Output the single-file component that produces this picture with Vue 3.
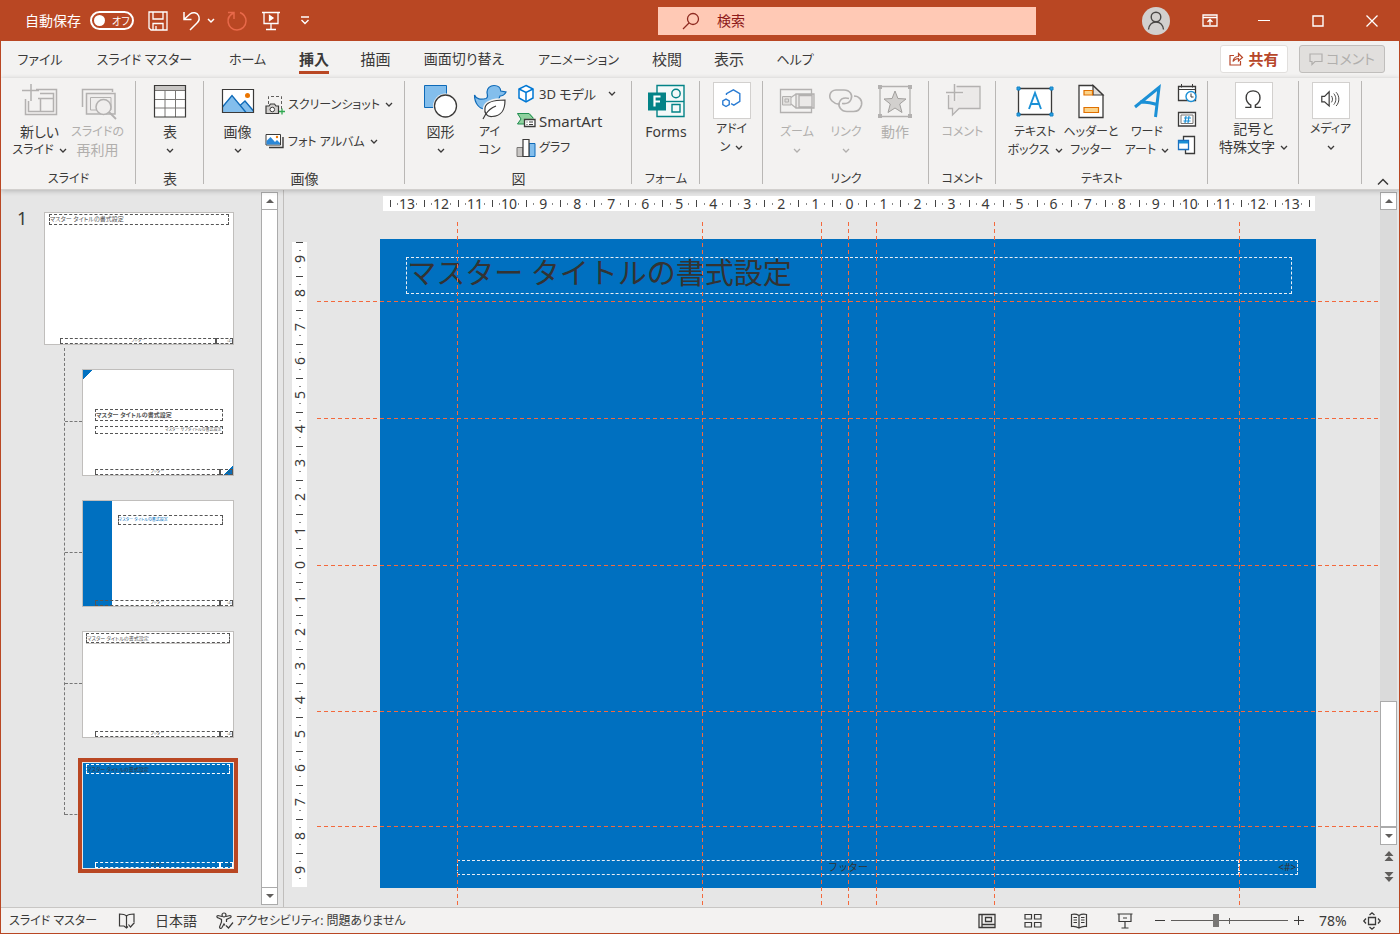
<script setup>
import { ref } from 'vue'

const tabs = [
  { text: 'ファイル', kana: true },
  { text: 'スライド マスター', kana: true },
  { text: 'ホーム', kana: true },
  { text: '挿入', active: true },
  { text: '描画' },
  { text: '画面切り替え', mixed: true },
  { text: 'アニメーション', kana: true },
  { text: '校閲' },
  { text: '表示' },
  { text: 'ヘルプ', kana: true }
]

const icons = {
  newSlide: '<path d="M15 6.500H35.500V31.500H4.500V16M19 10.500H32.500V28.500H7.500V18M17 15.500H32M19.500 15.500V28" fill="none" stroke="#b3b1b0" stroke-width="1.500"/><path d="M10 1V18M1 7.500H18" stroke="#b3b1b0" stroke-width="1.500"/>',
  reuse: '<path d="M3.500 24V6.500H33.500V9" fill="none" stroke="#b3b1b0" stroke-width="1.500"/><path d="M7.500 31V10.500H36V31H7.500Z" fill="#efedec" stroke="#b3b1b0" stroke-width="1.500"/><path d="M11.500 14.500H32V27H11.500Z" fill="none" stroke="#b3b1b0"/><circle cx="24.500" cy="24" r="7.500" fill="#f0eeed" stroke="#b3b1b0" stroke-width="1.500"/><path d="M30 29L37 36" stroke="#b3b1b0" stroke-width="1.800"/>',
  table: '<path d="M3 3H35V34H3Z" fill="#fff"/><path d="M3 3H35V7H3Z" fill="#c8c6c4"/><path d="M3.500 7.500H34.500M3.500 16.500H34.500M3.500 25H34.500M14 7V34M24.500 7V34" stroke="#797775" fill="none"/><path d="M3.500 2.500H34.500V34H3.500Z" fill="none" stroke="#3b3a39" stroke-width="1.200"/>',
  picture: '<path d="M3 6H35V30H3Z" fill="#fff"/><path d="M3.500 24L13 12.500L21 22.500L26 18L34.500 27V29.500H3.500Z" fill="#83beec"/><path d="M3.500 24L13 12.500L27 29.500M21 22.500L26 18L34.500 28" fill="none" stroke="#0e6ab8" stroke-width="1.300"/><circle cx="28.500" cy="12.500" r="2.500" fill="#eb7500"/><path d="M3.500 6.500H34.500V29.500H3.500Z" fill="none" stroke="#3b3a39" stroke-width="1.200"/>',
  screenshot: '<path d="M3.500 9V1.500H16.500V15" fill="none" stroke="#605e5c" stroke-dasharray="3 2"/><path d="M1 11H4L5.500 9H9.500L11 11H13.500V18.500H1Z" fill="#d2d0ce" stroke="#3b3a39" stroke-width="1.200"/><circle cx="7.300" cy="14.500" r="2.300" fill="#fff" stroke="#3b3a39"/><path d="M14 16.500H20M17 13.500V19.500" stroke="#2fa84f" stroke-width="1.300"/>',
  album: '<path d="M1 2.500H15.500V13H1Z" fill="#fff" stroke="#3b3a39"/><path d="M1.500 9L5.500 5L10 10L12 8L15 11V12.500H1.500Z" fill="#2b88d8"/><circle cx="12" cy="5" r="1.200" fill="#eb7500"/><path d="M4 15.500H18V5M18 15.500V5" fill="none" stroke="#3b3a39" stroke-width="1.400"/>',
  shapes: '<path d="M2.500 2.500H24.500V24.500H2.500Z" fill="#83beec" stroke="#0e6ab8"/><circle cx="23.500" cy="23" r="12.500" fill="#f3f2f1"/><circle cx="23.500" cy="23" r="11" fill="#fff" stroke="#3b3a39" stroke-width="1.300"/>',
  iconSet: '<path d="M3.500 12C5 16 10 17 15 15.500C18 14 16 12 16 9C16 5.500 19 2.500 23 2.500C27 2.500 29.500 5 29.800 8L35 9C34 11.500 31 13 29 13L27 18L14 26C8 26 3.500 20 3.500 12Z" fill="#83beec" stroke="#0e6ab8" stroke-width="1.200"/><path d="M34 17C26 17 15 18 14 25C13 30 16 34 21 33.500C31 33 34 27 34 17Z" fill="#f3f2f1" stroke="#f3f2f1" stroke-width="4"/><path d="M34 17C26 17 15 18 14 25C13 30 16 34 21 33.500C31 33 34 27 34 17Z" fill="#fff" stroke="#3b3a39" stroke-width="1.200"/><path d="M12 36L14.500 31.500C17 27.500 20 25 25 23" fill="none" stroke="#3b3a39" stroke-width="1.200"/>',
  cube: '<path d="M10 1.500L17 5V14L10 18L3 14V5Z" fill="#fff" stroke="#0078d4" stroke-width="1.500"/><path d="M3 5L10 8.500L17 5M10 8.500V18" fill="none" stroke="#0078d4" stroke-width="1.500"/>',
  smartArt: '<path d="M1 2.500H14L18 7V8H8V13H1L5 8Z" fill="#8fd19e"/><path d="M8 13H1.500L5 8L1.500 2.500H13L17 7" fill="none" stroke="#218d51"/><path d="M8.500 8.500H19V15.500H8.500Z" fill="#fff" stroke="#3b3a39" stroke-width="1.300"/><path d="M10.500 11H11.500M10.500 13.500H11.500M13 11H17M13 13.500H17" stroke="#3b3a39"/>',
  chart: '<path d="M1 9.500H7V18.500H1Z" fill="#c8c6c4" stroke="#797775"/><path d="M13 5.500H19V18.500H13Z" fill="#83beec" stroke="#0e6ab8"/><path d="M7 1.500H13V18.500H7Z" fill="#fff" stroke="#3b3a39" stroke-width="1.200"/>',
  forms: '<path d="M10 2.500H37V33.500H10Z" fill="#f3f9f9" stroke="#038387" stroke-width="1.400"/><path d="M10 18.500H37" stroke="#038387" stroke-width="1.400"/><circle cx="29" cy="10.500" r="4.200" fill="none" stroke="#038387" stroke-width="1.400"/><path d="M25 21.500H33V29H25Z" fill="none" stroke="#038387" stroke-width="1.400"/><path d="M1 9.500H19V27.500H1Z" fill="#038387"/><path d="M7.500 23.500V13.500H13.500M7.500 18.500H13" fill="none" stroke="#fff" stroke-width="2.200"/>',
  addin: '<path d="M13 13V11.500L20.500 7.500L27.500 11.500V20L21 24L18 22.500" fill="none" stroke="#2b7cd3" stroke-width="1.500"/><path d="M12.500 17.500L16 19.500V23.500L12.500 25.500L9 23.500V19.500Z" fill="none" stroke="#2b7cd3" stroke-width="1.500"/>',
  zoom: '<path d="M2.500 6.500H33.500V29.500H2.500Z" fill="none" stroke="#b3b1b0" stroke-width="1.300"/><path d="M4.500 13.500H13V22H4.500ZM7 16H10.500V19H7Z" fill="#e1dfdd" stroke="#b3b1b0"/><path d="M13 14.500L18 11M13 21L18 25M18 11H36V25H18ZM21 12.500H34V24H21Z" fill="#ebe9e8" stroke="#b3b1b0" stroke-width="1.300"/>',
  link: '<path d="M13 21C9 21.500 7 20 5 18C1 14 2.500 7.500 9 7H17C23 7 26 12 24 16.500C22.500 20 19 21 15 20.500" fill="none" stroke="#b3b1b0" stroke-width="1.600"/><path d="M27 13C32 13 35.500 17 34.500 22C33.500 26 31 28.500 26.500 28.500H20C14 28.500 10.500 23 12.500 19C14 15.500 18 14.500 22 15.500" fill="none" stroke="#b3b1b0" stroke-width="1.600"/>',
  action: '<path d="M4 5.500V32M34 5.500V32M6 3.500H32M6 33.500H32" stroke="#b3b1b0" stroke-width="1.300"/><path d="M2 2H6V6H2ZM32 2H36V6H32ZM2 31H6V35H2ZM32 31H36V35H32Z" fill="#b3b1b0"/><path d="M19 8L21.900 15.500L30 16L23.700 21L26 29.500L19 25L12 29.500L14.300 21L8 16L16.100 15.500Z" fill="#d2d0ce" stroke="#a19f9d"/>',
  comment: '<path d="M10 3.500H36V25.500H15L8.500 32V25.500H4.500V12" fill="#ebe9e8" stroke="#b3b1b0" stroke-width="1.300"/><path d="M10.500 0V18M1.500 9.500H19" stroke="#f3f2f1" stroke-width="4"/><path d="M10.500 1V18M2 9.500H19" stroke="#b3b1b0" stroke-width="1.500"/>',
  textBox: '<path d="M2.500 5.500H35.500V31.500H2.500Z" fill="#fff" stroke="#3b3a39" stroke-width="1.300"/><path d="M1 4H4V7H1ZM34 4H37V7H34ZM1 30H4V33H1ZM34 30H37V33H34Z" fill="#2b9fe0" stroke="#1584c8"/><path d="M13 26L19 10L25 26M15 21H23" fill="none" stroke="#1b90d6" stroke-width="1.900"/>',
  header: '<path d="M7 2.500H21L31 12V34.500H7Z" fill="#fff" stroke="#3b3a39" stroke-width="1.300"/><path d="M21 2.500V12H31Z" fill="#e1dfdd" stroke="#3b3a39" stroke-width="1.200"/><path d="M12 7.500H20.500V12H12ZM12 24.500H26.500V29.500H12Z" fill="#fbd38a" stroke="#e07000" stroke-width="1.200"/>',
  wordArt: '<path d="M7 24L31 4.500L27.500 34M12 19C18 19 25 20 30 22" fill="none" stroke="#1b90d6" stroke-width="3"/>',
  date: '<path d="M1.500 3.500H18.500V17.500H1.500Z" fill="#fff" stroke="#3b3a39" stroke-width="1.300"/><path d="M1.500 6.500H18.500M4.500 1V4.500M15.500 1V4.500" stroke="#3b3a39"/><circle cx="14" cy="13.500" r="5" fill="#fff" stroke="#1b90d6" stroke-width="1.400"/><path d="M14 10.500V14H16.500" fill="none" stroke="#3b3a39"/>',
  slideNo: '<path d="M1.500 3.500H18.500V17H1.500Z" fill="#fff" stroke="#3b3a39" stroke-width="1.300"/><path d="M4 6H16V14.500H4Z" fill="none" stroke="#797775"/><path d="M9 7L8 14M12 7L11 14M7 9H14M6.500 12H13.500" stroke="#1b90d6" stroke-width="1.200"/>',
  object: '<path d="M6.500 6V1.500H17.500V18.500H8.500V14" fill="#fff" stroke="#3b3a39" stroke-width="1.300"/><path d="M1.500 5.500H11.500V14.500H1.500Z" fill="#fff" stroke="#1b70c0" stroke-width="1.300"/><path d="M2 6H11V8.500H2Z" fill="#1b90d6"/>',
  omega: '<path d="M9.500 26.500H15.500V24C12 22 10.500 19.500 10.500 16C10.500 11.500 13.500 8.500 18 8.500C22.500 8.500 25.500 11.500 25.500 16C25.500 19.500 24 22 20.500 24V26.500H26.500" fill="none" stroke="#3b3a39" stroke-width="1.500"/>',
  sound: '<path d="M9 14.500H12L17 9.500V25L12 20.500H9Z" fill="none" stroke="#3b3a39" stroke-width="1.300"/><path d="M19.500 14C21 16 21 19 19.500 21M22 11.500C25 15 25 20 22 23.500M24.500 10C28.500 14 28.500 21 24.500 25" fill="none" stroke="#3b3a39"/>'
}

const groups = [
  { name: 'スライド', cls: 'g-slide', kana: true, big: [
    { icon: 'newSlide', lines: ['新しい', 'スライド'], chev: true },
    { icon: 'reuse', lines: ['スライドの', '再利用'], off: true }] },
  { name: '表', cls: 'g-table', big: [{ icon: 'table', lines: ['表', ''], chev: true }] },
  { name: '画像', cls: 'g-image', big: [{ icon: 'picture', lines: ['画像', ''], chev: true }],
    small: [{ icon: 'screenshot', text: 'スクリーンショット', chev: true }, { icon: 'album', text: 'フォト アルバム', chev: true }] },
  { name: '図', cls: 'g-figure', big: [
    { icon: 'shapes', lines: ['図形', ''], chev: true },
    { icon: 'iconSet', lines: ['アイ', 'コン'] }],
    small: [{ icon: 'cube', text: '3D モデル', chev: true }, { icon: 'smartArt', text: 'SmartArt', latin: true }, { icon: 'chart', text: 'グラフ', kana: true }] },
  { name: 'フォーム', cls: 'g-form', kana: true, big: [{ icon: 'forms', lines: ['Forms'] }] },
  { name: '', cls: 'g-addin', big: [{ icon: 'addin', lines: ['アドイ', 'ン'], chev: true, boxed: true }] },
  { name: 'リンク', cls: 'g-link', kana: true, big: [
    { icon: 'zoom', lines: ['ズーム', ''], chev: true, off: true },
    { icon: 'link', lines: ['リンク', ''], chev: true, off: true },
    { icon: 'action', lines: ['動作'], off: true }] },
  { name: 'コメント', cls: 'g-comment', kana: true, big: [{ icon: 'comment', lines: ['コメント'], off: true }] },
  { name: 'テキスト', cls: 'g-text', kana: true, big: [
    { icon: 'textBox', lines: ['テキスト', 'ボックス'], chev: true },
    { icon: 'header', lines: ['ヘッダーと', 'フッター'] },
    { icon: 'wordArt', lines: ['ワード', 'アート'], chev: true }],
    tiny: [{ icon: 'date', label: '日付と時刻' }, { icon: 'slideNo', label: 'スライド番号' }, { icon: 'object', label: 'オブジェクト' }] },
  { name: '', cls: 'g-symbol', big: [{ icon: 'omega', lines: ['記号と', '特殊文字'], chev: true, boxed: true }] },
  { name: '', cls: 'g-media', big: [{ icon: 'sound', lines: ['メディア', ''], chev: true, boxed: true }] }
]

const isKana = (s) => /^[ぁ-ヿ\s]+$/.test(s)
const marks = (n) => Array.from({ length: n * 2 + 1 }, (_, i) => Math.abs(i - n))
const hMarks = marks(13)
const vMarks = marks(9)

const vGuides = ['8.3%', '34.5%', '47.2%', '50%', '53%', '65.6%', '91.8%']
const hGuides = ['9.7%', '27.6%', '50.3%', '72.8%', '90.5%']

const layouts = ['title', 'section', 'plain', 'blue']
const selected = ref('blue')
const zoomLevel = ref(38)
const autosave = ref(false)
</script>

<template>
  <div class="window">
    <header class="titlebar">
      <div class="quick">
        <span class="autosave">自動保存</span>
        <button class="toggle" role="switch" :aria-checked="autosave" aria-label="自動保存" @click="autosave = !autosave"><i></i><span>オフ</span></button>
        <button class="qbtn save" aria-label="保存"><svg width="20" height="20" viewBox="0 0 20 20" fill="none" stroke="#fff" stroke-width="1.300"><path d="M1 1H19V19H3L1 17ZM5 1V8H15V1M5 19V12.500H15V19M8 19V15" /></svg></button>
        <button class="qbtn undo" aria-label="元に戻す"><svg width="20" height="20" viewBox="0 0 20 20" fill="none" stroke="#fff" stroke-width="1.500"><path d="M2 1V8.500H9.500M2 8.500L8 3C11 .7 15 1.500 16.500 4.500C18 7.500 17 10 15 12L8 19" /></svg></button>
        <button class="qbtn drop" aria-label="元に戻す一覧"><svg width="8" height="5" viewBox="0 0 8 5" fill="none" stroke="#fff" stroke-width="1.500"><path d="M1 1L4 4L7 1" /></svg></button>
        <button class="qbtn redo" aria-label="やり直し"><svg width="20" height="20" viewBox="0 0 20 20" fill="none" stroke="#e8694a" stroke-width="1.500"><path d="M1 1.500H7V8M6.500 2C2.500 4 .500 7.500 1.200 11.500C2 16 5.500 19 10 19C15 19 19 15 19 10C19 6 16.500 3 13 1.500" /></svg></button>
        <button class="qbtn show" aria-label="スライド ショー"><svg width="20" height="20" viewBox="0 0 20 20" fill="none" stroke="#fff" stroke-width="1.300"><path d="M1 1.500H19M3 1.500V12.500H17V1.500M10 12.500V18M5 18.500H15" /><path d="M8.500 4.500L12 7L8.500 9.500Z" fill="#fff" /></svg></button>
        <button class="qbtn custom" aria-label="カスタマイズ"><svg width="10" height="9" viewBox="0 0 10 9" fill="none" stroke="#fff" stroke-width="1.400"><path d="M1 1H9M1.500 4L5 7.500L8.500 4" /></svg></button>
      </div>
      <label class="search">
        <svg width="18" height="18" viewBox="0 0 18 18" fill="none" stroke="#8e2a20" stroke-width="1.300"><circle cx="11" cy="7" r="5.500" /><path d="M7 11L1 17" /></svg>
        <input type="search" placeholder="検索" aria-label="検索" />
      </label>
      <div class="caption">
        <button class="avatar" aria-label="アカウント"><svg width="28" height="28" viewBox="0 0 28 28" fill="none" stroke="#4a4846" stroke-width="1.400"><circle cx="14" cy="10" r="4.800" /><path d="M6.500 22.500C7 18 10 15 14 15C18 15 21 18 21.500 22.500" /></svg></button>
        <button class="cap" aria-label="リボンの表示オプション"><svg width="16" height="13" viewBox="0 0 16 13" fill="none" stroke="#fff" stroke-width="1.300"><path d="M1 1H15V12H1ZM1 3.500H15M8 11V5.500M5.500 8L8 5.500L10.500 8" /></svg></button>
        <button class="cap" aria-label="最小化"><svg width="12" height="12" viewBox="0 0 12 12" stroke="#fff"><path d="M0 5.500H12" /></svg></button>
        <button class="cap" aria-label="最大化"><svg width="12" height="12" viewBox="0 0 12 12" fill="none" stroke="#fff" stroke-width="1.400"><path d="M1 1H11V11H1Z" /></svg></button>
        <button class="cap" aria-label="閉じる"><svg width="12" height="12" viewBox="0 0 12 12" stroke="#fff" stroke-width="1.300"><path d="M.5 .5L11.500 11.500M11.500 .5L.5 11.500" /></svg></button>
      </div>
    </header>

    <nav class="tabbar">
      <div class="tabs">
        <button v-for="t in tabs" :key="t.text" class="tab" :class="{ kana: t.kana, mixed: t.mixed, active: t.active }"><span>{{ t.text }}</span></button>
      </div>
      <div class="actions">
        <button class="share"><svg width="14" height="14" viewBox="0 0 14 14" fill="none" stroke="#b7472a" stroke-width="1.200"><path d="M5 3.500H1V13H11.500V9M4 9.500C4.500 6 6.500 4.500 9.500 4.500V1.500L13.500 5.500L9.500 9V6.500C7 6.500 5.500 7.500 4 9.500Z" /></svg>共有</button>
        <button class="comments" disabled><svg width="14" height="13" viewBox="0 0 14 13" fill="none" stroke="#b1afad" stroke-width="1.200"><path d="M1 1H13V8.500H6L3 11.500V8.500H1Z" /></svg>コメント</button>
      </div>
    </nav>

    <section class="ribbon">
      <div v-for="g in groups" :key="g.cls" class="group" :class="g.cls">
        <div class="items">
          <button v-for="b in g.big" :key="b.icon" class="big" :class="{ off: b.off, boxed: b.boxed }" :disabled="b.off">
            <svg class="big-icon" width="38" height="38" viewBox="0 0 38 38" v-html="icons[b.icon]"></svg>
            <span v-for="(l, i) in b.lines" :key="i" class="line" :class="{ kana: isKana(l) }">{{ l }}<svg v-if="b.chev && i === b.lines.length - 1" class="chev" width="8" height="5" viewBox="0 0 8 5"><path d="M1 1L4 4L7 1" fill="none" stroke="currentColor" stroke-width="1.300" /></svg></span>
          </button>
          <div v-if="g.small" class="small-list">
            <button v-for="s in g.small" :key="s.icon" class="small">
              <svg width="20" height="20" viewBox="0 0 20 20" v-html="icons[s.icon]"></svg>
              <span :class="{ latin: s.latin, kana: s.kana }">{{ s.text }}</span>
              <svg v-if="s.chev" class="chev" width="8" height="5" viewBox="0 0 8 5"><path d="M1 1L4 4L7 1" fill="none" stroke="currentColor" stroke-width="1.300" /></svg>
            </button>
          </div>
          <div v-if="g.tiny" class="tiny-list">
            <button v-for="s in g.tiny" :key="s.icon" class="tiny" :aria-label="s.label"><svg width="20" height="20" viewBox="0 0 20 20" v-html="icons[s.icon]"></svg></button>
          </div>
        </div>
        <div class="gname" :class="{ kana: g.kana }">{{ g.name }}</div>
      </div>
      <button class="collapse" aria-label="リボンを折りたたむ"><svg width="12" height="8" viewBox="0 0 12 8" fill="none" stroke="#3b3a39" stroke-width="1.500"><path d="M1 6.500L6 1.500L11 6.500" /></svg></button>
    </section>

    <main class="work">
      <aside class="panel">
        <span class="num">1</span>
        <div class="thumbs">
          <button class="thumb master" aria-label="スライド マスター">
            <span class="ph head">マスター タイトルの書式設定</span>
            <span class="ph foot">フッター</span><span class="ph no">‹#›</span>
          </button>
          <div class="tree">
            <div v-for="l in layouts" :key="l" class="branch">
              <button class="thumb" :class="[l, { selected: selected === l }]" :aria-label="'レイアウト ' + l" @click="selected = l">
                <span class="ph head">マスター タイトルの書式設定</span>
                <span v-if="l === 'title'" class="ph sub">マスター サブタイトルの書式設定</span>
                <span class="ph foot">フッター</span><span class="ph no">‹#›</span>
              </button>
            </div>
          </div>
        </div>
      </aside>
      <div class="scroll left">
        <button class="sb up" aria-label="上へ"></button>
        <div class="track"></div>
        <button class="sb down" aria-label="下へ"></button>
      </div>
      <div class="stage">
        <div class="hruler"><span v-for="(m, i) in hMarks" :key="i">{{ m }}</span><i></i></div>
        <div class="vruler"><span v-for="(m, i) in vMarks" :key="i"><b>{{ m }}</b></span></div>
        <div class="slide">
          <div class="box title">マスター タイトルの書式設定</div>
          <div class="box footer">フッター</div>
          <div class="box number">&lt;#&gt;</div>
          <svg class="guides vertical" stroke="#f4693c" stroke-dasharray="4 3" shape-rendering="crispEdges"><line v-for="x in vGuides" :key="x" :x1="x" :x2="x" y1="0" y2="100%" /></svg>
          <svg class="guides horizontal" stroke="#f4693c" stroke-dasharray="4 3" shape-rendering="crispEdges"><line v-for="y in hGuides" :key="y" x1="0" x2="100%" :y1="y" :y2="y" /></svg>
        </div>
      </div>
      <div class="scroll right">
        <button class="sb up" aria-label="上へ"></button>
        <div class="gap"></div>
        <div class="knob"></div>
        <button class="sb down" aria-label="下へ"></button>
        <button class="page" aria-label="前のスライド"><svg width="10" height="12" viewBox="0 0 10 12" fill="#605e5c"><path d="M5 0L9.500 5H.5ZM5 5L9.500 10H.5Z" /></svg></button>
        <button class="page" aria-label="次のスライド"><svg width="10" height="12" viewBox="0 0 10 12" fill="#605e5c"><path d="M.5 1H9.500L5 6ZM.5 6H9.500L5 11Z" /></svg></button>
      </div>
    </main>

    <footer class="status">
      <span class="s-view">スライド マスター</span>
      <button class="s-icon book" aria-label="スペル チェック"><svg width="18" height="16" viewBox="0 0 18 16" fill="none" stroke="#3b3a39" stroke-width="1.200"><path d="M8.500 14V3C6.500 1 4 1 1.500 1V13H6L8.500 15L10 13.500M8.500 3C10.500 1 13 1 16 1V9M10.500 11.500L12.500 14L16.500 9.500" /></svg></button>
      <span class="s-lang">日本語</span>
      <button class="s-access"><svg width="18" height="18" viewBox="0 0 18 18" fill="none" stroke="#3b3a39" stroke-width="1.200"><circle cx="8" cy="3" r="2" /><path d="M6 4.500L2 3.500C.5 3.500 .5 5.500 2 5.800L5.500 7.500V10L3.500 15C3.500 16.500 5 17 6 15.500L8 12L9 13.500M10 4.500L14 3.500C15.500 3.500 15.500 5.500 14 5.800L10.500 7.500V10M10 13.500L12.500 16L17 10.500" /></svg>アクセシビリティ: 問題ありません</button>
      <div class="s-right">
        <button class="s-icon" aria-label="標準"><svg width="18" height="16" viewBox="0 0 18 16" fill="none" stroke="#3b3a39" stroke-width="1.300"><path d="M1 1.500H17V14.500H1ZM4 1.500V14.500M4 11.500H17M7.500 4.500H13.500V8.500H7.500Z" /></svg></button>
        <button class="s-icon" aria-label="スライド一覧"><svg width="18" height="16" viewBox="0 0 18 16" fill="none" stroke="#3b3a39" stroke-width="1.200"><path d="M1 1.500H7.500V6H1ZM10.500 1.500H17V6H10.500ZM1 9.500H7.500V14H1ZM10.500 9.500H17V14H10.500Z" /></svg></button>
        <button class="s-icon" aria-label="閲覧表示"><svg width="18" height="16" viewBox="0 0 18 16" fill="none" stroke="#3b3a39" stroke-width="1.200"><path d="M9 15V2.500C6.500 1 4 1 1.500 1.500V13.500C4 13 6.500 13.500 9 15C11.500 13.500 14 13 16.500 13.500V1.500C14 1 11.500 1 9 2.500M3.500 4.500H7M3.500 7H7M3.500 9.500H7M11 4.500H14.500M11 7H14.500M11 9.500H14.500" /></svg></button>
        <button class="s-icon" aria-label="スライド ショー"><svg width="18" height="16" viewBox="0 0 18 16" fill="none" stroke="#3b3a39" stroke-width="1.200"><path d="M1.500 1H16.500M3 1V8.500H15V1M9 8.500V15M5.500 15H12.500M7 5H11" /></svg></button>
        <button class="zbtn" aria-label="縮小"><svg width="10" height="10" viewBox="0 0 10 10" stroke="#3b3a39"><path d="M0 4.500H10" /></svg></button>
        <input v-model="zoomLevel" class="slider" type="range" min="0" max="100" aria-label="ズーム" />
        <button class="zbtn" aria-label="拡大"><svg width="10" height="10" viewBox="0 0 10 10" stroke="#3b3a39"><path d="M0 4.500H10M4.500 0V9" /></svg></button>
        <span class="percent">78%</span>
        <button class="fit" aria-label="ウィンドウに合わせる"><svg width="18" height="18" viewBox="0 0 18 18" fill="none" stroke="#3b3a39" stroke-width="1.300"><path d="M5.500 5.500H12.500V12.500H5.500ZM6.500 3L9 .8L11.500 3M6.500 15L9 17.200L11.500 15M3 6.500L.8 9L3 11.500M15 6.500L17.200 9L15 11.500" /></svg></button>
      </div>
    </footer>
  </div>
</template>

<style>
body { background: #e6e6e6; }
</style>

<style scoped>
* { box-sizing: border-box; }
.window {
  display: flex; flex-direction: column; height: 100vh; min-width: 1400px;
  border: 1px solid #b94723; border-top: 0; background: #e6e6e6; color: #3b3a39;
  font-family: "Noto Sans", "Noto Sans CJK JP", sans-serif; font-size: 14px; line-height: 18px;
  font-feature-settings: "palt"; white-space: nowrap; overflow: hidden;
}
button { border: 0; background: none; padding: 0; margin: 0; font: inherit; font-feature-settings: inherit; color: inherit; white-space: nowrap; }
svg { display: block; flex: none; overflow: visible; }

.titlebar { display: grid; grid-template-columns: 47fr 27fr 26fr; height: 41px; align-items: center; background: #b94723; color: #fff; flex: none; }
.quick { display: flex; align-items: center; padding-left: 24px; }
.autosave { width: 65px; }
.toggle { display: flex; align-items: center; gap: 7px; width: 44px; height: 19px; border: 2px solid #fff; border-radius: 10px; padding: 0 2px; font-size: 10px; }
.toggle i { width: 11px; height: 11px; border-radius: 50%; background: #fff; flex: none; }
.qbtn { display: flex; align-items: center; justify-content: center; height: 24px; width: 20px; }
.save { margin-left: 14px; }
.undo { margin-left: 14px; }
.drop { width: 8px; margin-left: 5px; }
.redo { margin-left: 12px; }
.show { margin-left: 14px; }
.custom { margin-left: 14px; }
.search { display: flex; align-items: center; height: 28px; background: #ffc9b5; padding-left: 24px; gap: 17px; }
.search input { flex: 1; min-width: 0; border: 0; outline: 0; background: none; padding: 0; font: inherit; color: #8e1a1a; }
.search input::placeholder { color: #8e1a1a; opacity: 1; }
.caption { display: flex; align-items: center; justify-content: flex-end; }
.avatar { width: 28px; height: 28px; border-radius: 50%; background: #d2d0ce; margin-right: 13px; }
.cap { display: flex; align-items: center; justify-content: center; width: 54px; height: 40px; }

.tabbar { display: flex; justify-content: space-between; height: 37px; background: #f3f2f1; flex: none; }
.tabs { display: grid; grid-template-columns: 78px 131px 75px 58px 65px 112px 117px 60px 64px 68px; }
.tab { display: flex; align-items: center; justify-content: center; font-size: 15px; }
.tab span { line-height: 24px; border-bottom: 3px solid transparent; margin-top: 1px; }
.tab.mixed { font-size: 14px; }
.tab.kana { font-size: 13px; }
.tab.active { font-weight: 700; }
.tab.active span { border-color: #b94723; }
.actions { display: flex; gap: 11px; padding: 4px 14px 0 0; }
.share, .comments { display: flex; align-items: center; justify-content: center; gap: 5px; height: 28px; border-radius: 3px; }
.share { width: 68px; background: #fff; color: #b7472a; font-weight: 700; font-size: 15px; border: 1px solid #e1dfdd; }
.comments { width: 86px; background: #e1dfdd; color: #b1afad; border: 1px solid #c0bebc; font-size: 14px; gap: 3px; }

.ribbon { display: flex; height: 112px; background: #f3f2f1; flex: none; border-bottom: 1px solid #d2d0ce; box-shadow: 0 1px 5px #0000003a; position: relative; z-index: 1; }
.group { display: flex; flex-direction: column; position: relative; flex: none; }
.group::after { content: ""; position: absolute; right: 0; top: 3px; bottom: 5px; width: 1px; background: #b9b7b5; }
.items { display: flex; flex: 1; justify-content: center; padding-top: 5px; align-items: flex-start; }
.gname { height: 20px; line-height: 20px; text-align: center; }
.gname.kana { font-size: 12px; }
.g-slide { width: 135px; }
.g-table { width: 68px; }
.g-image { width: 201px; }
.g-figure { width: 227px; }
.g-form { width: 68px; }
.g-addin { width: 63px; }
.g-link { width: 166px; }
.g-comment { width: 67px; }
.g-text { width: 212px; }
.g-symbol { width: 91px; }
.g-media { width: 63px; }
.big { display: flex; flex-direction: column; align-items: center; width: 49px; }
.g-slide .big { width: 58px; }
.g-text .big { width: 56px; }
.g-symbol .big { width: 80px; }
.g-image .items, .g-figure .items { justify-content: flex-start; }
.g-image .items { padding-left: 9px; }
.g-figure .items { padding-left: 11px; }
.line { display: flex; align-items: center; justify-content: center; gap: 5px; height: 18px; }
.line.kana { font-size: 12px; }
.big-icon { margin-bottom: 2px; }
.off { color: #b1afad; }
.boxed .big-icon { background: #fff; border: 1px solid #d2d0ce; height: 37px; margin: -1px 0 1px; }
.small-list { display: flex; flex-direction: column; }
.small { display: flex; align-items: center; gap: 3px; height: 27px; }
.g-image .small-list { margin-left: 3px; padding-top: 8px; gap: 10px; }
.g-image .small { font-size: 12px; }
.g-image .small .chev { margin-left: 2px; }
.small .chev { margin-left: 9px; }
.g-figure .small-list { margin-left: 2px; margin-top: -3px; }
.g-figure .small { font-size: 13px; }
.small .latin { font-size: 15px; }
.small .kana { font-size: 12px; }
.tiny-list { display: flex; flex-direction: column; gap: 6px; margin-left: 2px; }
.collapse { margin: auto 10px 3px auto; }

.work { display: flex; flex: 1; min-height: 0; }
.panel { display: flex; width: 260px; padding: 22px 0 0 16px; flex: none; overflow: hidden; }
.num { width: 27px; font-size: 18px; line-height: 12px; }
.thumb { display: block; position: relative; width: 152px; height: 107px; background: #fff; border: 1px solid #c0bebc; text-align: left; overflow: hidden; color: #555; }
.master { width: 190px; height: 133px; }
.tree { position: relative; margin-top: 24px; padding-left: 38px; display: flex; flex-direction: column; gap: 24px; }
.tree::before { content: ""; position: absolute; left: 20px; top: -21px; bottom: 54px; border-left: 1px dashed #777; }
.branch { position: relative; }
.branch::before { content: ""; position: absolute; left: -17px; width: 17px; top: 52px; border-top: 1px dashed #777; }
.ph { position: absolute; border: 1px dashed #555; font-size: 6px; line-height: 8px; overflow: hidden; }
.head { left: 2%; right: 2%; top: 1%; height: 11px; }
.foot { left: 8%; right: 9%; bottom: 0; height: 6px; line-height: 4px; font-size: 4px; text-align: center; }
.no { right: 0; width: 9%; bottom: 0; height: 6px; line-height: 4px; font-size: 4px; text-align: right; }
.thumb:not(.master) .head { font-size: 5px; height: 10px; }
.thumb.title .head { left: 8%; right: 7%; top: 37%; height: 12px; font-size: 6px; line-height: 10px; font-weight: 700; }
.sub { left: 8%; right: 7%; top: 53%; height: 8px; line-height: 6px; font-size: 4px; text-align: right; }
.thumb.title { background: linear-gradient(135deg, #0070c0 7px, transparent 7px), linear-gradient(315deg, #0070c0 7px, transparent 7px), #fff; }
.thumb.section { background: linear-gradient(90deg, #0070c0 29px, #fff 29px); }
.thumb.section .head { left: 23%; right: 7%; top: 13%; font-size: 4px; color: #0070c0; }
.thumb.plain .head { box-shadow: 0 1px 0 #c8c6c4; }
.thumb.blue { background: #0070c0; color: #333; }
.blue .ph { border-color: #fff; }
.selected { outline: 4px solid #b94723; border-color: #e6e6e6; }

.scroll { display: flex; flex-direction: column; width: 17px; padding: 2px 0; flex: none; align-items: stretch; }
.sb { height: 18px; border: 1px solid #ababab; background: #fff; display: flex; align-items: center; justify-content: center; flex: none; }
.up::before { content: ""; border: 4px solid transparent; border-top: 0; border-bottom-color: #605e5c; }
.down::before { content: ""; border: 4px solid transparent; border-bottom: 0; border-top-color: #605e5c; }
.track { flex: 1; background: #fff; border: 1px solid #ababab; border-width: 0 1px; }
.right { margin-right: 2px; }
.gap { flex: 497; background: #dadada; }
.knob { flex: 125; background: #fff; border: 1px solid #ababab; }
.page { display: flex; justify-content: center; height: 20px; align-items: center; }
.right .sb.down { margin-bottom: 2px; }
.right .page:last-child { margin-bottom: 18px; }

.stage { display: grid; grid-template-columns: 8px 15px 73px 1fr 64px; grid-template-rows: 6px 15px 28px 1fr 19px; flex: 1; min-width: 0; margin-left: 5px; border-left: 1px solid #c0bebc; }
.hruler { grid-area: 2 / 4; display: flex; background: #fff; margin: 0 1px 0 3px; padding: 0 5px 0 7px; align-items: center; }
.hruler span { flex: 1; text-align: center; line-height: 15px; font-size: 14px; background: linear-gradient(#444, #444) 0 50% / 1px 7px no-repeat, linear-gradient(#888, #888) 22% 50% / 1px 2px no-repeat, linear-gradient(#888, #888) 78% 50% / 1px 2px no-repeat; }
.hruler i { width: 1px; height: 7px; background: #444; }
.vruler { grid-area: 4 / 2; display: flex; flex-direction: column; background: #fff; margin: 3px 0 1px; }
.vruler span { flex: 1; display: flex; align-items: center; justify-content: center; background: linear-gradient(#444, #444) 50% 0 / 7px 1px no-repeat, linear-gradient(#888, #888) 50% 24% / 2px 1px no-repeat, linear-gradient(#888, #888) 50% 76% / 2px 1px no-repeat; }
.vruler b { writing-mode: vertical-rl; transform: rotate(180deg); font-weight: 400; font-size: 14px; line-height: 15px; }
.slide { grid-area: 4 / 4; position: relative; background: #0070c0; color: #333; font-feature-settings: normal; }
.box { position: absolute; border: 1px dashed #e8eef5; }
.box.title { left: 2.8%; right: 2.6%; top: 2.8%; height: 37px; font-size: 29px; line-height: 30px; }
.box.footer { left: 8.2%; right: 8.2%; bottom: 2%; height: 15px; font-size: 10px; line-height: 12px; text-align: center; }
.box.number { left: 91.8%; right: 1.9%; bottom: 2%; height: 15px; font-size: 10px; line-height: 12px; text-align: right; padding-right: 1px; }
.guides { position: absolute; fill: none; }
.guides.vertical { left: 0; top: -17px; width: 100%; height: calc(100% + 34px); }
.guides.horizontal { left: -63px; top: 0; width: calc(100% + 126px); height: 100%; }

.status { display: flex; align-items: center; height: 26px; background: #f3f2f1; border-top: 1px solid #c8c6c4; padding-left: 8px; flex: none; }
.s-view { width: 109px; font-size: 12px; }
.s-lang { width: 61px; margin-left: 19px; }
.s-access { display: flex; align-items: center; gap: 2px; font-size: 12px; }
.s-right { display: flex; align-items: center; margin-left: auto; padding-right: 18px; }
.s-right .s-icon { margin-right: 28px; }
.s-right .s-icon:nth-child(4) { margin-right: 21px; }
.slider { appearance: none; width: 117px; height: 14px; margin: 0 6px 0 6px; background: linear-gradient(#605e5c, #605e5c) 50% 50% / 100% 1px no-repeat, linear-gradient(#605e5c, #605e5c) 50% 50% / 1px 6px no-repeat; }
.slider::-webkit-slider-thumb { appearance: none; width: 6px; height: 13px; background: #797775; }
.percent { margin-left: 15px; width: 44px; font-size: 14px; }
</style>
